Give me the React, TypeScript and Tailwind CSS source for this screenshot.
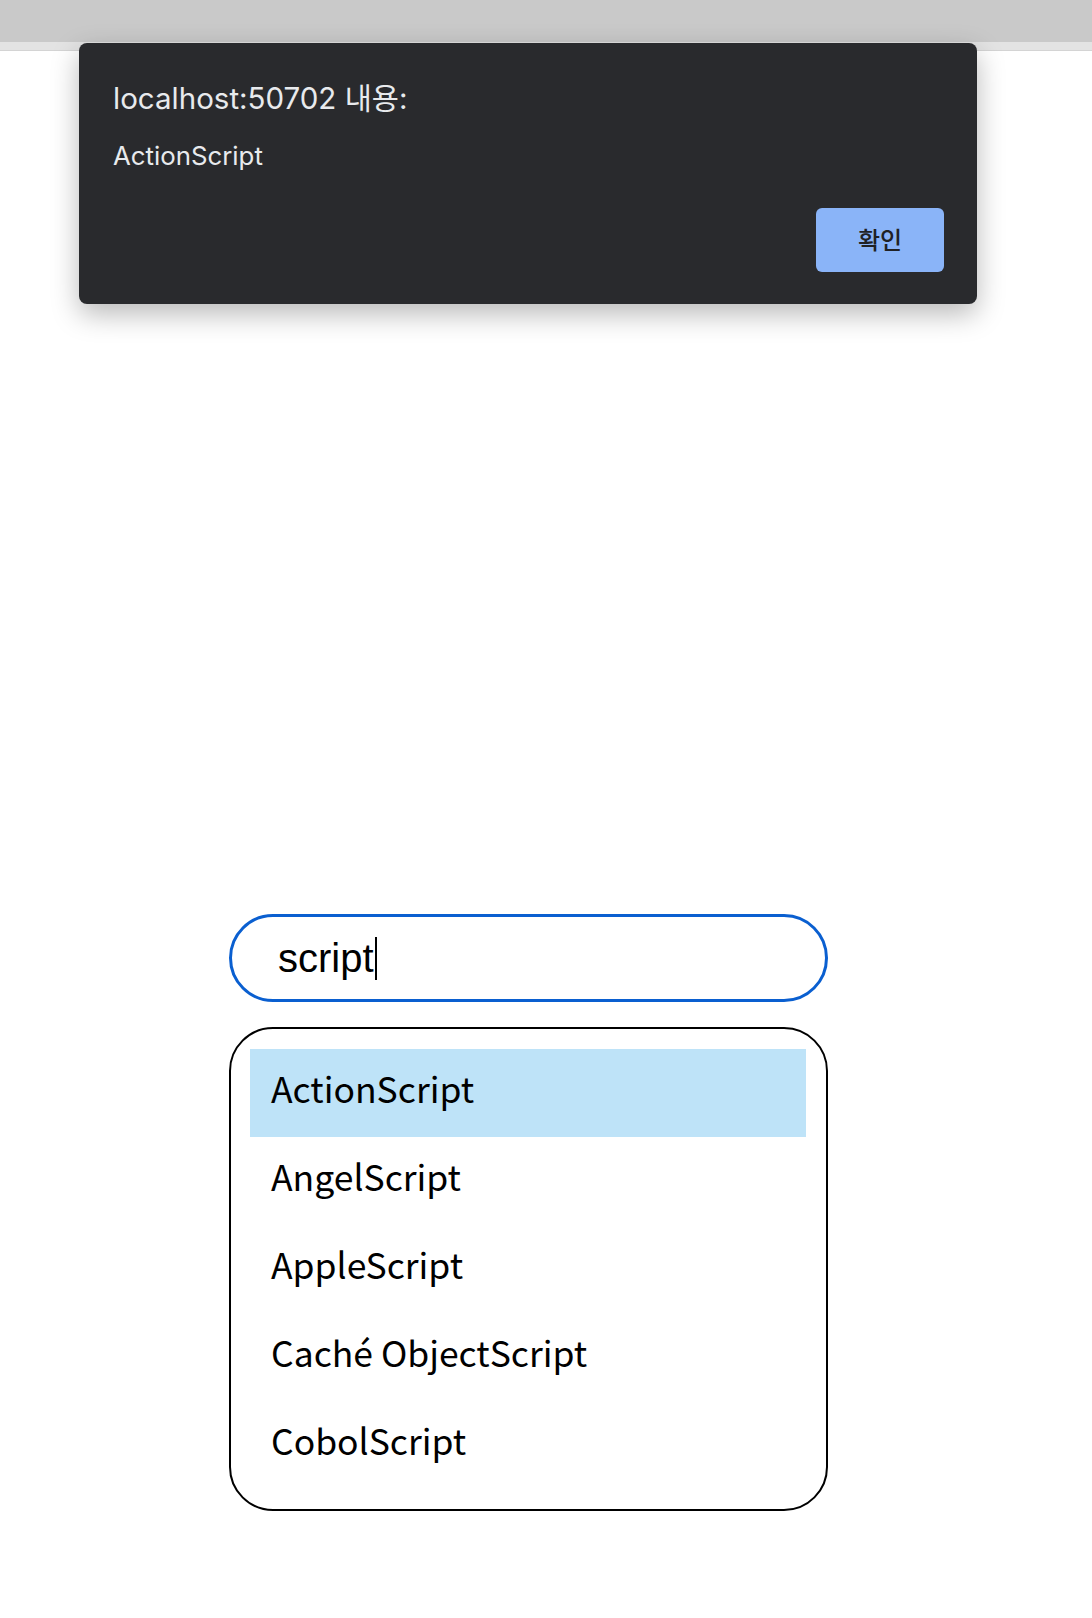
const LANGUAGES = ['ActionScript', 'AngelScript', 'AppleScript', 'Caché ObjectScript', 'CobolScript'];

function AlertDialog() {
  return (
    <div className="absolute left-[79px] top-[43px] w-[898px] h-[261px] rounded-[8px] bg-[#292a2d] shadow-[0_10px_28px_rgba(0,0,0,0.28)] flex flex-col pt-[37px] pl-[34px] pr-[33px] pb-[32px] font-['Inter','Noto_Sans_CJK_KR',sans-serif]">
      <div className="text-[29.5px] leading-[36px] text-[#e8eaed]">localhost:50702 내용:</div>
      <div className="mt-[24px] text-[25.8px] leading-[31px] text-[#e8eaed]">ActionScript</div>
      <div className="mt-auto flex justify-end">
        <button className="w-[128px] h-[64px] rounded-[6px] bg-[#8ab4f8] text-[#202124] text-[24px] font-medium font-['Noto_Sans_CJK_KR',sans-serif] pb-[3px]">
          확인
        </button>
      </div>
    </div>
  );
}

export default function App() {
  const active = 0;

  return (
    <div className="relative min-h-[1618px] bg-white">
      {/* browser chrome strip */}
      <div className="h-[42px] bg-[#c9c9c9]" />
      <div className="h-[9px] bg-[#e3e3e3] border-b border-[#d4d4d4]" />

      <main className="pl-[229px] pt-[863px]">
        <div className="w-[599px] h-[88px] rounded-full border-[3px] border-[#0a5fd0] flex items-center pl-[46px]">
          <span className="text-[40px] leading-none text-black font-['Liberation_Sans',Arial,sans-serif]">script</span>
          <span className="ml-[1px] w-[2px] h-[43px] bg-black" />
        </div>

        <ul className="mt-[25px] w-[599px] rounded-[44px] border-2 border-black pl-[19px] pr-[20px] py-[20px] font-['Noto_Sans_CJK_KR',sans-serif]">
          {LANGUAGES.map((lang, i) => (
            <li
              key={lang}
              className={`h-[88px] flex items-center pl-[21px] pb-[10px] text-[35.5px] text-black ${i === active ? 'bg-[#bee3f8]' : ''}`}
            >
              {lang}
            </li>
          ))}
        </ul>
      </main>

      <AlertDialog />
    </div>
  );
}
